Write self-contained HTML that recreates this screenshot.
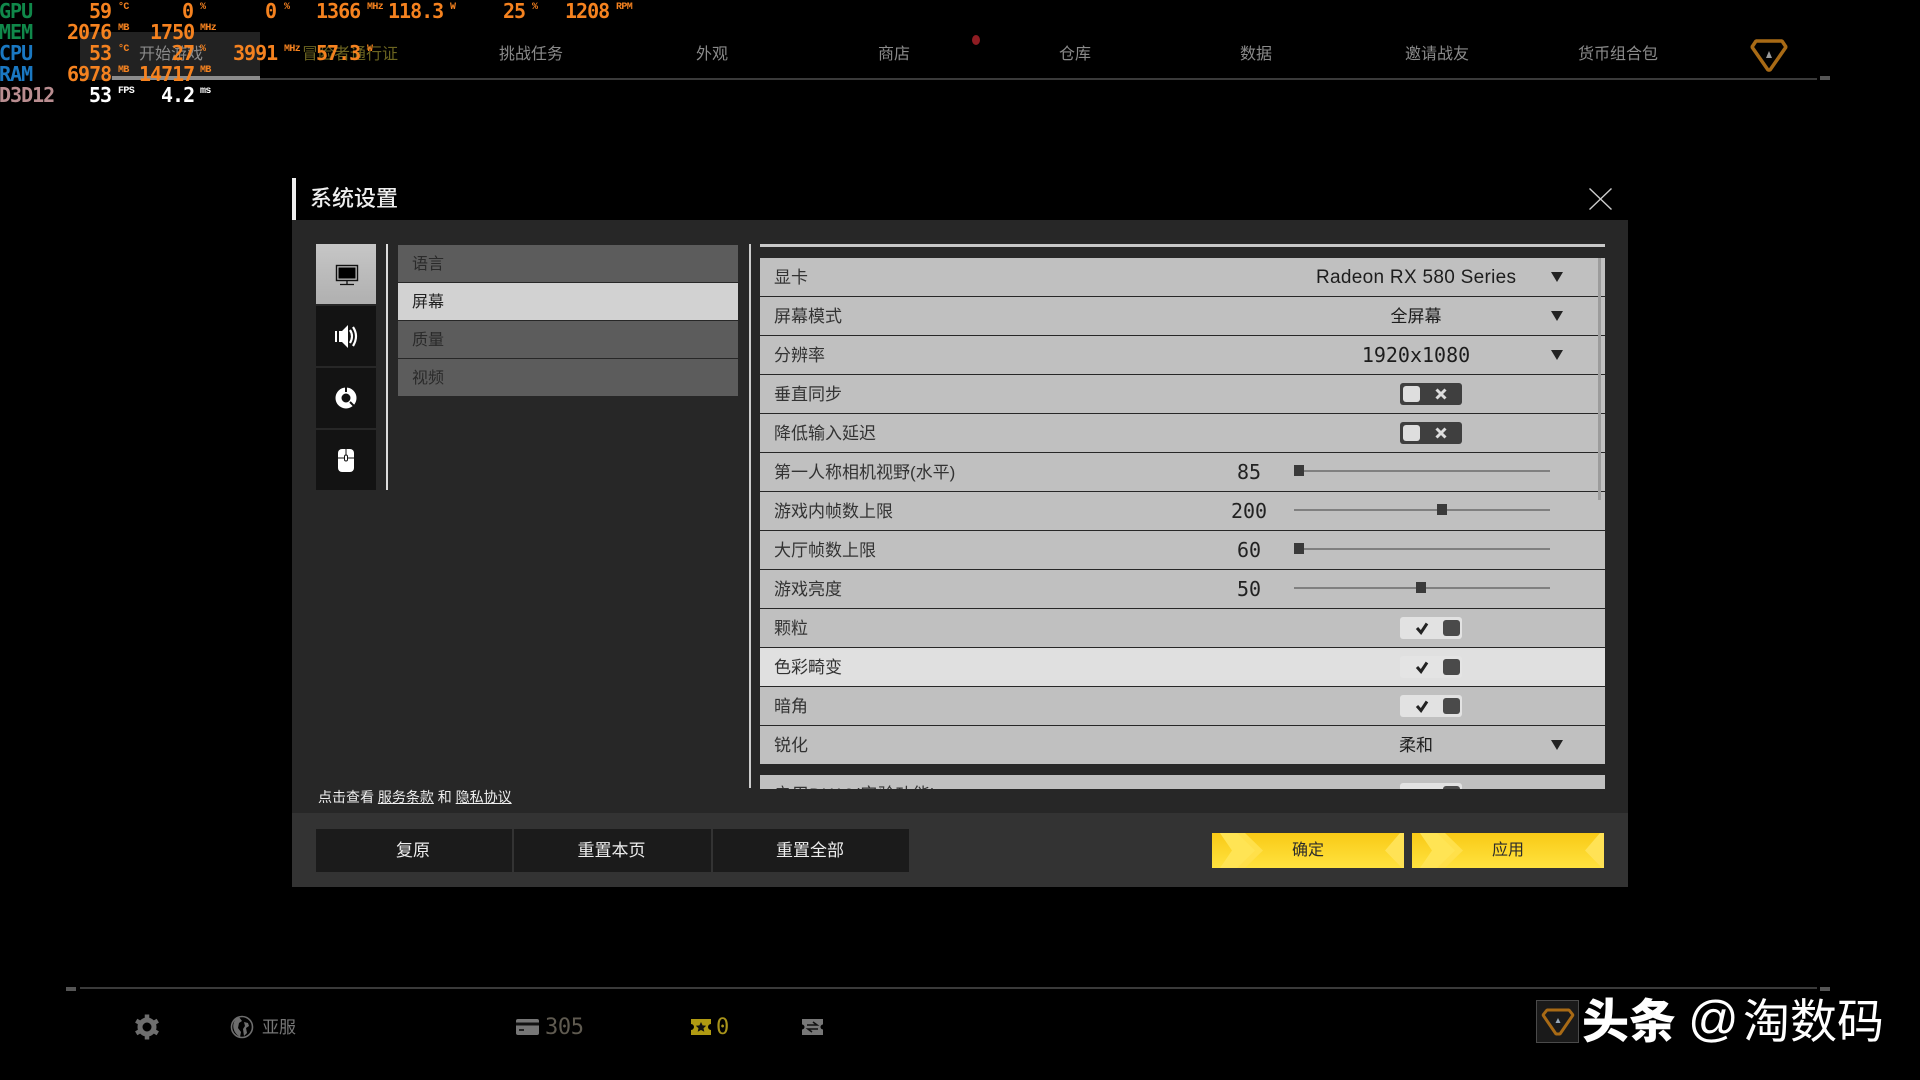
<!DOCTYPE html>
<html lang="zh"><head><meta charset="utf-8"><title>系统设置</title>
<style>
html,body{margin:0;padding:0;width:1920px;height:1080px;background:#000;overflow:hidden}
body{position:relative;font-family:"Liberation Sans","Noto Sans CJK SC",sans-serif}
.a,.a *{box-sizing:border-box}
.a{position:absolute}
.t{position:absolute;white-space:nowrap;line-height:1}
.h{position:absolute;white-space:nowrap;font:bold 20px/20px "DejaVu Sans Mono",monospace;letter-spacing:-1px;color:#f5821f;margin-top:1px;margin-left:-1px}
.u{position:absolute;white-space:nowrap;font:bold 10px/10px "Liberation Mono",monospace;letter-spacing:-.6px;color:#f5821f;margin-top:1px}
.g{color:#10884a}.b{color:#1a78c2}.p{color:#b98d90}.w{color:#fff}
.n{position:absolute;top:46px;font-size:16px;line-height:18px;color:#8a8a8a;white-space:nowrap;transform:translateX(-50%)}
.row{position:absolute;left:760px;width:845px;height:38px;background:#c0c0c0}
.row .l{position:absolute;left:14px;top:10px;font-size:17px;line-height:20px;color:#333;white-space:nowrap}
.val{position:absolute;top:10px;left:640px;width:200px;transform:translateX(-50%);text-align:center;font-size:17px;line-height:20px;color:#1d1d1d;white-space:nowrap}
.num{position:absolute;font:20px/20px "DejaVu Sans Mono",monospace;top:9px;color:#222;width:60px;text-align:center;left:459px}
.arr{position:absolute;left:791px;top:14px;width:0;height:0;border-left:6px solid transparent;border-right:6px solid transparent;border-top:10px solid #222}
.tg{position:absolute;left:640px;top:8px;width:62px;height:22px;border-radius:3px}
.off{background:#3f3f3f}.on{background:#e2e2e2}
.k{position:absolute;top:3px;width:17px;height:16px;border-radius:3px}
.off .k{left:3px;background:#dedede}.on .k{left:43px;background:#4a4a4a}
.tg svg{position:absolute;left:0;top:0}
.tr{position:absolute;left:534px;top:17px;width:256px;height:2px;background:#808080}
.th{position:absolute;top:12px;width:10px;height:11px;background:#3a3a3a}
.sub{position:absolute;left:398px;width:340px;height:37px;box-sizing:border-box;background:#5c5c5c;color:#2a2a2a;font-size:16px;line-height:39px;padding-left:14px}
.tab{position:absolute;left:316px;width:60px;height:60px;background:#131313}
.btn{position:absolute;top:829px;height:43px;width:197px;background:#1b1b1b;color:#eee;font-size:17px;line-height:43px;text-align:center;text-indent:-2px}
.yb{position:absolute;top:833px;width:192px;height:35px}
.yb span{position:absolute;left:0;right:0;top:0;text-align:center;font-size:16px;line-height:36px;color:#2c2c2c}
</style></head><body>

<!-- top nav -->
<div class="a" style="left:80px;top:32px;width:180px;height:48px;background:#222"></div>
<div class="a" style="left:112px;top:76px;width:148px;height:4px;background:#8c8c8c"></div>
<div class="a" style="left:260px;top:78px;width:1557px;height:2px;background:#3a3a3a"></div>
<div class="a" style="left:1820px;top:76px;width:10px;height:4px;background:#555"></div>
<div class="n" style="left:171px">开始游戏</div>
<div class="n" style="left:350px;color:#6b6420">冒险者通行证</div>
<div class="n" style="left:531px">挑战任务</div>
<div class="n" style="left:712px">外观</div>
<div class="n" style="left:894px">商店</div>
<div class="n" style="left:1075px">仓库</div>
<div class="n" style="left:1256px">数据</div>
<div class="n" style="left:1437px">邀请战友</div>
<div class="n" style="left:1618px">货币组合包</div>
<div class="a" style="left:972px;top:35px;width:8px;height:10px;border-radius:50%;background:#8f1c22"></div>
<svg class="a" style="left:1749px;top:36px" width="40" height="38" viewBox="0 0 40 38"><path d="M7 5H33L37 11L21 34H19L3 11Z" fill="none" stroke="#a86a15" stroke-width="3.5" stroke-linejoin="bevel"/><path d="M20 15l3 7h-6z" fill="#999"/></svg>

<!-- HUD -->
<div class="h g" style="left:0;top:0">GPU</div><div class="h" style="left:90px;top:0">59</div><div class="u" style="left:118px;top:2px">°C</div>
<div class="h" style="left:183px;top:0">0</div><div class="u" style="left:200px;top:2px">%</div>
<div class="h" style="left:266px;top:0">0</div><div class="u" style="left:284px;top:2px">%</div>
<div class="h" style="left:317px;top:0">1366</div><div class="u" style="left:367px;top:2px">MHz</div>
<div class="h" style="left:389px;top:0">118.3</div><div class="u" style="left:450px;top:2px">W</div>
<div class="h" style="left:504px;top:0">25</div><div class="u" style="left:532px;top:2px">%</div>
<div class="h" style="left:566px;top:0">1208</div><div class="u" style="left:616px;top:2px">RPM</div>

<div class="h g" style="left:0;top:21px">MEM</div><div class="h" style="left:68px;top:21px">2076</div><div class="u" style="left:118px;top:23px">MB</div>
<div class="h" style="left:151px;top:21px">1750</div><div class="u" style="left:200px;top:23px">MHz</div>

<div class="h b" style="left:0;top:42px">CPU</div><div class="h" style="left:90px;top:42px">53</div><div class="u" style="left:118px;top:44px">°C</div>
<div class="h" style="left:173px;top:42px">27</div><div class="u" style="left:200px;top:44px">%</div>
<div class="h" style="left:234px;top:42px">3991</div><div class="u" style="left:284px;top:44px">MHz</div>
<div class="h" style="left:317px;top:42px">57.3</div><div class="u" style="left:367px;top:44px">W</div>

<div class="h b" style="left:0;top:63px">RAM</div><div class="h" style="left:68px;top:63px">6978</div><div class="u" style="left:118px;top:65px">MB</div>
<div class="h" style="left:140px;top:63px">14717</div><div class="u" style="left:200px;top:65px">MB</div>

<div class="h p" style="left:0;top:84px">D3D12</div><div class="h w" style="left:90px;top:84px">53</div><div class="u w" style="left:118px;top:86px">FPS</div>
<div class="h w" style="left:162px;top:84px">4.2</div><div class="u w" style="left:200px;top:86px">ms</div>

<!-- title -->
<div class="a" style="left:292px;top:178px;width:4px;height:42px;background:#eee"></div>
<div class="t" style="left:310px;top:188px;font-size:22px;color:#eee;font-weight:500">系统设置</div>
<svg class="a" style="left:1588px;top:187px" width="25" height="24"><path d="M1.5 1.5L23.5 22.5M23.5 1.5L1.5 22.5" stroke="#ccc" stroke-width="1.4" fill="none"/></svg>

<!-- panel -->
<div class="a" style="left:292px;top:220px;width:1336px;height:667px;background:#272727"></div>
<div class="a" style="left:292px;top:813px;width:1336px;height:74px;background:#333"></div>

<!-- tabs -->
<div class="tab" style="top:244px;background:linear-gradient(#c6c6c6,#b0b0b0)">
<svg width="60" height="60"><rect x="20.5" y="21.5" width="21" height="15" fill="none" stroke="#111" stroke-width="1.4"/><rect x="22.5" y="23.5" width="17" height="11" fill="#000"/><path d="M31 37V40M24 40.5H38" stroke="#111" stroke-width="1.3"/></svg></div>
<div class="tab" style="top:306px">
<svg width="60" height="60"><path d="M19 25h2v11h-2zM23 25h3l6-6v23l-6-6h-3z" fill="#fff"/><path d="M34 24q4 6 0 13M37 21q6 9 0 19" stroke="#fff" stroke-width="2.2" fill="none"/></svg></div>
<div class="tab" style="top:368px">
<svg width="60" height="60"><circle cx="30" cy="30" r="7.5" fill="none" stroke="#fff" stroke-width="6"/><path d="M30 19v5M34 34l6 6" stroke="#131313" stroke-width="2"/></svg></div>
<div class="tab" style="top:430px">
<svg width="60" height="60"><rect x="22" y="19" width="16" height="23" rx="4" fill="#fff"/><path d="M22 28h16M30 19v6" stroke="#131313" stroke-width="1"/><rect x="28.5" y="25" width="3" height="6" rx="1.5" fill="#fff" stroke="#131313"/></svg></div>
<div class="a" style="left:386px;top:244px;width:1.5px;height:246px;background:#ddd"></div>
<div class="a" style="left:749px;top:244px;width:1.5px;height:544px;background:#ccc"></div>

<!-- sub menu -->
<div class="sub" style="top:245px">语言</div>
<div class="sub" style="top:283px;background:#d2d2d2;color:#222">屏幕</div>
<div class="sub" style="top:321px">质量</div>
<div class="sub" style="top:359px">视频</div>

<!-- settings list -->
<div class="a" style="left:760px;top:244px;width:845px;height:3px;background:#c8c8c8"></div>
<div class="row" style="top:258px"><div class="l">显卡</div><div class="val" style="left:656px;font-size:19px;letter-spacing:.3px">Radeon RX 580 Series</div><div class="arr"></div></div>
<div class="row" style="top:297px"><div class="l">屏幕模式</div><div class="val" style="left:656px">全屏幕</div><div class="arr"></div></div>
<div class="row" style="top:336px"><div class="l">分辨率</div><div class="val" style="left:656px;top:9px;font:20px/20px 'DejaVu Sans Mono',monospace">1920x1080</div><div class="arr"></div></div>
<div class="row" style="top:375px"><div class="l">垂直同步</div><div class="tg off"><div class="k"></div><svg width="62" height="22"><path d="M36.5 6.5l9 9M45.5 6.5l-9 9" stroke="#ddd" stroke-width="3"/></svg></div></div>
<div class="row" style="top:414px"><div class="l">降低输入延迟</div><div class="tg off"><div class="k"></div><svg width="62" height="22"><path d="M36.5 6.5l9 9M45.5 6.5l-9 9" stroke="#ddd" stroke-width="3"/></svg></div></div>
<div class="row" style="top:453px"><div class="l">第一人称相机视野(水平)</div><div class="num">85</div><div class="tr"></div><div class="th" style="left:534px"></div></div>
<div class="row" style="top:492px"><div class="l">游戏内帧数上限</div><div class="num">200</div><div class="tr"></div><div class="th" style="left:677px"></div></div>
<div class="row" style="top:531px"><div class="l">大厅帧数上限</div><div class="num">60</div><div class="tr"></div><div class="th" style="left:534px"></div></div>
<div class="row" style="top:570px"><div class="l">游戏亮度</div><div class="num">50</div><div class="tr"></div><div class="th" style="left:656px"></div></div>
<div class="row" style="top:609px"><div class="l">颗粒</div><div class="tg on"><div class="k"></div><svg width="62" height="22"><path d="M17 11l4 4.5 6-9" stroke="#222" stroke-width="3" fill="none"/></svg></div></div>
<div class="row" style="top:648px;background:#e0e0e0"><div class="l">色彩畸变</div><div class="tg on" style="background:#e4e4e4"><div class="k"></div><svg width="62" height="22"><path d="M17 11l4 4.5 6-9" stroke="#222" stroke-width="3" fill="none"/></svg></div></div>
<div class="row" style="top:687px"><div class="l">暗角</div><div class="tg on"><div class="k"></div><svg width="62" height="22"><path d="M17 11l4 4.5 6-9" stroke="#222" stroke-width="3" fill="none"/></svg></div></div>
<div class="row" style="top:726px"><div class="l">锐化</div><div class="val" style="left:656px">柔和</div><div class="arr"></div></div>
<div class="a" style="left:760px;top:775px;width:845px;height:14px;overflow:hidden"><div class="row" style="left:0;top:0"><div class="l" style="letter-spacing:.6px">启用DX12(实验功能)</div><div class="tg on"><div class="k"></div></div></div></div>
<div class="a" style="left:1598px;top:258px;width:3px;height:242px;background:#9c9c9c"></div>

<!-- footer -->
<div class="t" style="left:318px;top:790px;font-size:14px;color:#eee">点击查看 <u>服务条款</u> 和 <u>隐私协议</u></div>
<div class="btn" style="left:316px;width:196px">复原</div>
<div class="btn" style="left:514px">重置本页</div>
<div class="btn" style="left:713px;width:196px">重置全部</div>

<div class="yb" style="left:1212px"><svg width="192" height="35"><defs><linearGradient id="y" x1="0" y1="0" x2="0" y2="1"><stop offset="0" stop-color="#f9ca16"/><stop offset="1" stop-color="#ffe23f"/></linearGradient></defs><rect width="192" height="35" fill="url(#y)"/><path d="M8 0H33L51 17.5L33 35H8L20 17.5Z" fill="#ffe04a"/><path d="M8 0H25L43 17.5L25 35H8L20 17.5Z" fill="#ffe658" opacity=".7"/><path d="M192 0V35H190L173 17.5L188 0Z" fill="#ffe255"/></svg><span>确定</span></div>
<div class="yb" style="left:1412px"><svg width="192" height="35"><rect width="192" height="35" fill="url(#y)"/><path d="M8 0H33L51 17.5L33 35H8L20 17.5Z" fill="#ffe04a"/><path d="M8 0H25L43 17.5L25 35H8L20 17.5Z" fill="#ffe658" opacity=".7"/><path d="M192 0V35H190L173 17.5L188 0Z" fill="#ffe255"/></svg><span>应用</span></div>

<!-- bottom bar -->
<div class="a" style="left:66px;top:987px;width:10px;height:4px;background:#555"></div>
<div class="a" style="left:80px;top:987px;width:1737px;height:2px;background:#3a3a3a"></div>
<div class="a" style="left:1820px;top:987px;width:10px;height:4px;background:#555"></div>

<svg class="a" style="left:133px;top:1013px" width="28" height="28" viewBox="0 0 28 28"><circle cx="14" cy="14" r="7" fill="none" stroke="#6e6e6e" stroke-width="5"/><g stroke="#6e6e6e" stroke-width="4.5"><path d="M14 1.5v5M14 21.5v5M3.2 7.7l4.3 2.5M20.5 17.8l4.3 2.5M3.2 20.3l4.3-2.5M20.5 10.2l4.3-2.5"/></g></svg>
<svg class="a" style="left:230px;top:1015px" width="24" height="24" viewBox="0 0 24 24"><circle cx="12" cy="12" r="10.5" fill="none" stroke="#6e6e6e" stroke-width="1.6"/><path d="M9 2C4 4 2 10 4 15c1 3 3 5 6 7l1-5-3-4 1-5 3-2zM14 7l4 1 1 3-3 2 1 5-3 3-1-7 2-3z" fill="#6e6e6e"/></svg>
<div class="t" style="left:262px;top:1019px;font-size:17px;color:#767676">亚服</div>
<svg class="a" style="left:516px;top:1019px" width="23" height="16"><rect width="23" height="16" rx="2" fill="#767676"/><rect y="3.5" width="23" height="3" fill="#111"/><rect x="3" y="10" width="5" height="2" fill="#222"/></svg>
<div class="t" style="left:545px;top:1017px;font:22px/22px 'DejaVu Sans Mono',monospace;letter-spacing:-.4px;color:#5f5a50">305</div>
<svg class="a" style="left:691px;top:1019px" width="20" height="16" viewBox="0 0 20 16"><path d="M0 0H20V5a3 3 0 0 0 0 6V16H0V11a3 3 0 0 0 0-6Z" fill="#b09a12"/><path d="M10 3l1.6 3.4 3.6.4-2.7 2.4.8 3.6L10 11l-3.3 1.8.8-3.6-2.7-2.4 3.6-.4Z" fill="#111"/></svg>
<div class="t" style="left:716px;top:1017px;font:22px/22px 'DejaVu Sans Mono',monospace;color:#a8931a">0</div>
<svg class="a" style="left:802px;top:1019px" width="21" height="16" viewBox="0 0 21 16"><path d="M0 0H21V5.5a2.5 2.5 0 0 0 0 5V16H0V10.5a2.5 2.5 0 0 0 0-5Z" fill="#777"/><path d="M5 6H15L11 3M16 10H6L10 13" stroke="#111" stroke-width="1.6" fill="none"/></svg>

<!-- logo + watermark -->
<div class="a" style="left:1536px;top:1000px;width:43px;height:43px;background:#1a1a1a;border:1px solid #4a4a4a"></div>
<svg class="a" style="left:1540px;top:1005px" width="36" height="34" viewBox="0 0 36 34"><path d="M7 5H29L33 10L20 29H16L3 10Z" fill="none" stroke="#a86a15" stroke-width="3" stroke-linejoin="bevel"/><path d="M18 13l2.5 5h-5z" fill="#9ab"/></svg>
<div class="t" style="left:1582px;top:993px;font-size:47px;line-height:50px;font-weight:900;color:#fff;font-family:'Noto Sans CJK SC',sans-serif">头条</div>
<div class="t" style="left:1688px;top:994px;font-size:50px;line-height:50px;color:#fff;font-family:'Liberation Sans',sans-serif">@</div>
<div class="t" style="left:1743px;top:993px;font-size:47px;line-height:50px;color:#fff;font-family:'Noto Sans CJK SC',sans-serif">淘数码</div>

</body></html>
